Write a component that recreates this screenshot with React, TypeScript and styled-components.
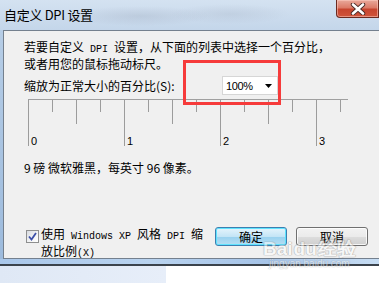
import styled, { createGlobalStyle } from "styled-components";

const GlobalStyle = createGlobalStyle`
  html, body {
    margin: 0;
    padding: 0;
    background: #ffffff;
    overflow: hidden;
  }
  body {
    font-family: "Noto Sans CJK SC", "Noto Sans", sans-serif;
    color: #000;
  }
`;

const TICKS = Array.from({ length: 14 }, (_, i) => i);

function tickHeight(i: number) {
  if (i % 4 === 0) return 46;
  if (i % 2 === 0) return 24;
  return 12;
}

function App() {
  return (
    <>
      <GlobalStyle />
      <Page>
        <Window>
          <TitleBar>
            <Title>自定义 DPI 设置</Title>
            <CloseButton>
              <svg width="16" height="12" viewBox="0 0 16 12">
                <path
                  d="M3 1.5 L13 10.5 M13 1.5 L3 10.5"
                  stroke="#4a2a26"
                  strokeWidth="4.4"
                  strokeLinecap="round"
                />
                <path
                  d="M3 1.5 L13 10.5 M13 1.5 L3 10.5"
                  stroke="#ffffff"
                  strokeWidth="2.6"
                  strokeLinecap="round"
                />
              </svg>
            </CloseButton>
          </TitleBar>
          <Body>
            <SideFrame />
            <Client>
              <Intro>
                若要自定义<Mono> DPI </Mono>设置，从下面的列表中选择一个百分比，
                <br />
                或者用您的鼠标拖动标尺。
              </Intro>
              <ScaleRow>
                <ScaleLabel>缩放为正常大小的百分比(S):</ScaleLabel>
                <Select>
                  <SelectValue>100%</SelectValue>
                  <svg width="7" height="4" viewBox="0 0 7 4">
                    <path d="M0 0 H7 L3.5 4 Z" fill="#000" />
                  </svg>
                </Select>
              </ScaleRow>
              <Ruler>
                {TICKS.map((i) => (
                  <Tick key={i} $h={tickHeight(i)}>
                    {i % 4 === 0 && <TickLabel>{i / 4}</TickLabel>}
                  </Tick>
                ))}
              </Ruler>
              <Info>9 磅 微软雅黑，每英寸 96 像素。</Info>
              <Footer>
                <CheckGroup>
                  <CheckBox>
                    <svg width="9" height="9" viewBox="0 0 9 9">
                      <path
                        d="M1 4.5 L3.5 7.5 L8 1"
                        stroke="#3c4fa8"
                        strokeWidth="1.8"
                        fill="none"
                      />
                    </svg>
                  </CheckBox>
                  <CheckLabel>
                    使用<Mono> Windows XP </Mono>风格<Mono> DPI </Mono>缩
                    <br />
                    放比例<Mono>(X)</Mono>
                  </CheckLabel>
                </CheckGroup>
                <Buttons>
                  <DialogButton $primary>确定</DialogButton>
                  <DialogButton>取消</DialogButton>
                </Buttons>
              </Footer>
            </Client>
          </Body>
          <BottomFrame />
          <Highlight />
          <Watermark>
            <WatermarkLogo>Bai<Paw>du</Paw>经验</WatermarkLogo>
            <WatermarkUrl>jingyan.baidu.com</WatermarkUrl>
          </Watermark>
        </Window>
        <Desktop>
          <DesktopTint />
        </Desktop>
      </Page>
    </>
  );
}

const Page = styled.div`
  width: 379px;
  height: 283px;
  display: flex;
  flex-direction: column;
  overflow: hidden;
`;

const Window = styled.div`
  position: relative;
  width: 379px;
  height: 266px;
  display: flex;
  flex-direction: column;
  background: linear-gradient(to bottom, #d2e0ef 0%, #c2d4e9 100%);
`;

const TitleBar = styled.div`
  height: 30px;
  display: flex;
  align-items: flex-start;
  padding-left: 4px;
  background:
    radial-gradient(ellipse 70px 10px at 140px 16px, rgba(120, 130, 150, 0.18), transparent),
    radial-gradient(ellipse 60px 10px at 230px 14px, rgba(120, 130, 150, 0.14), transparent),
    linear-gradient(to bottom, #d4e2f1 0%, #c4d6ea 100%);
`;

const Title = styled.div`
  margin-top: 7px;
  font-size: 13px;
  line-height: 16px;
  letter-spacing: -0.3px;
  color: #000;
`;

const CloseButton = styled.div`
  margin-left: auto;
  width: 43px;
  height: 18px;
  box-sizing: border-box;
  display: flex;
  align-items: center;
  justify-content: center;
  border: 1px solid #6b2a20;
  border-top: none;
  border-radius: 0 0 0 4px;
  background: linear-gradient(
    to bottom,
    #e9a99b 0%,
    #dc7b68 45%,
    #c7452f 55%,
    #d0553b 100%
  );
  box-shadow: inset 0 0 0 1px rgba(255, 210, 200, 0.5);
`;

const Body = styled.div`
  display: flex;
  flex: 0 0 auto;
`;

const SideFrame = styled.div`
  width: 3px;
  background: linear-gradient(to bottom, #b6cde6, #9dbbdd);
`;

const Client = styled.div`
  flex: 1;
  height: 229px;
  box-sizing: border-box;
  display: flex;
  flex-direction: column;
  padding: 9px 0 2px 20px;
  background: #f0f0f0;
  border: 1px solid #74808e;
  border-right: none;
`;

const Mono = styled.span`
  font-family: "Liberation Mono", monospace;
  font-size: 10px;
`;

const Intro = styled.div`
  font-size: 12px;
  line-height: 14px;
`;

const ScaleRow = styled.div`
  margin-top: 5px;
  height: 19px;
  display: flex;
  align-items: center;
`;

const ScaleLabel = styled.div`
  flex: 0 0 198px;
  font-size: 12px;
  line-height: 14px;
`;

const Select = styled.div`
  width: 56px;
  height: 19px;
  box-sizing: border-box;
  display: flex;
  align-items: center;
  justify-content: space-between;
  padding: 0 5px 0 3px;
  background: #fff;
  border: 1px solid #d6d6d6;
`;

const SelectValue = styled.span`
  font-family: "Liberation Sans", sans-serif;
  font-size: 11px;
  letter-spacing: -0.4px;
`;

const Ruler = styled.div`
  margin: 4px 0 0 4px;
  width: 320px;
  display: flex;
  align-items: flex-start;
  border-top: 1px solid #a0a0a0;
`;

const Tick = styled.div<{ $h: number }>`
  flex: 0 0 24px;
  height: ${(p) => p.$h}px;
  box-sizing: border-box;
  display: flex;
  align-items: flex-end;
  border-left: 1px solid #9c9c9c;
`;

const TickLabel = styled.span`
  padding-left: 2px;
  font-family: "Liberation Sans", sans-serif;
  font-size: 11px;
  line-height: 10px;
`;

const Info = styled.div`
  margin-top: 15px;
  font-size: 12px;
  line-height: 14px;
`;

const Footer = styled.div`
  margin-top: auto;
  height: 29px;
  display: flex;
  align-items: flex-start;
  padding: 0 11px 0 2px;
`;

const CheckGroup = styled.div`
  display: flex;
  align-items: flex-start;
`;

const CheckBox = styled.div`
  margin-top: 3px;
  width: 13px;
  height: 13px;
  box-sizing: border-box;
  display: flex;
  align-items: center;
  justify-content: center;
  border: 1px solid #8e8f8f;
  background: linear-gradient(135deg, #d8dbe0 0%, #f4f5f6 60%, #ffffff 100%);
`;

const CheckLabel = styled.div`
  margin-left: 2px;
  font-size: 12px;
  line-height: 14px;
`;

const Buttons = styled.div`
  margin-left: auto;
  display: flex;
  gap: 9px;
`;

const DialogButton = styled.div<{ $primary?: boolean }>`
  width: 72px;
  height: 19px;
  box-sizing: border-box;
  display: flex;
  align-items: center;
  justify-content: center;
  font-size: 12px;
  border-radius: 3px;
  border: 1px solid ${(p) => (p.$primary ? "#3c7fb1" : "#707070")};
  background: ${(p) =>
    p.$primary
      ? "linear-gradient(to bottom, #e5f4fc 0%, #c4e5f6 50%, #98d1ef 51%, #b6def3 100%)"
      : "linear-gradient(to bottom, #f2f2f2 0%, #ebebeb 50%, #dddddd 51%, #cfcfcf 100%)"};
  box-shadow: ${(p) =>
    p.$primary
      ? "inset 0 0 0 1px #5fe3fe"
      : "inset 0 0 0 1px rgba(255, 255, 255, 0.8)"};
`;

const BottomFrame = styled.div`
  flex: 1;
  border-bottom: 2px solid #3b434c;
  background: linear-gradient(
    to right,
    #a9c7ea 0%,
    #b9d3ef 40%,
    #a6c4e8 70%,
    #c7ddf3 100%
  );
`;

const Highlight = styled.div`
  position: absolute;
  left: 183px;
  top: 60px;
  width: 98px;
  height: 45px;
  box-sizing: border-box;
  border: 3px solid #f63b3b;
`;

const Watermark = styled.div`
  position: absolute;
  left: 263px;
  top: 240px;
  display: flex;
  flex-direction: column;
  align-items: center;
  opacity: 0.5;
  pointer-events: none;
`;

const WatermarkLogo = styled.div`
  font-family: "Liberation Sans", sans-serif;
  font-weight: bold;
  font-size: 19px;
  line-height: 18px;
  color: #ffffff;
  text-shadow: 0 0 1px #777, 0 0 1px #777, 0 0 1px #777;
`;

const Paw = styled.span`
  margin: 0 1px;
`;

const WatermarkUrl = styled.div`
  font-family: "Liberation Sans", sans-serif;
  font-size: 10px;
  line-height: 11px;
  color: #ffffff;
  text-shadow: 0 0 1px #777, 0 0 1px #777;
`;

const Desktop = styled.div`
  flex: 1;
  display: flex;
  background: #ffffff;
`;

const DesktopTint = styled.div`
  width: 166px;
  background: linear-gradient(to right, #dfe8f5, #e7eef9);
`;

export default App;
